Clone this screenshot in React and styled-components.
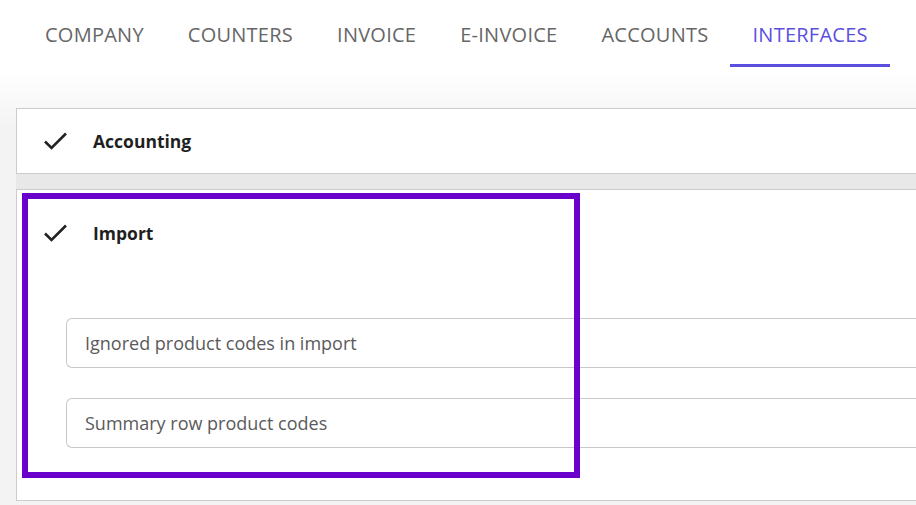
import React from 'react';
import styled, { createGlobalStyle } from 'styled-components';

const GlobalStyle = createGlobalStyle`
  html, body {
    margin: 0;
    padding: 0;
  }
  body {
    width: 916px;
    height: 505px;
    overflow: hidden;
    font-family: 'Open Sans', 'Liberation Sans', sans-serif;
    background: linear-gradient(180deg, #ffffff 0px, #ffffff 70px, #f3f3f3 130px, #f3f3f3 100%);
  }
`;

const Page = styled.div`
  height: 505px;
  display: flex;
  flex-direction: column;
`;

const Tabs = styled.nav`
  display: flex;
  padding-left: 23px;
  height: 67px;
`;

const Tab = styled.div`
  padding: 4px 22px 0;
  display: flex;
  align-items: center;
  font-size: 20px;
  font-weight: 500;
  letter-spacing: 0.25px;
  color: ${props => (props.active ? '#5b4fdf' : '#666666')};
  border-bottom: 3px solid ${props => (props.active ? '#5b4fdf' : 'transparent')};
  box-sizing: border-box;
  height: 67px;
`;

const Content = styled.div`
  margin-top: 41px;
  margin-left: 16px;
  display: flex;
  flex-direction: column;
  background: #e8e8e8;
`;

const Card = styled.section`
  position: relative;
  background: #fff;
  border: 1px solid #cccccc;
  border-right: none;
  margin-bottom: ${props => (props.spaced ? '15px' : '0')};
  padding-bottom: ${props => (props.open ? '52px' : '0')};
`;

const Header = styled.div`
  display: flex;
  align-items: center;
  height: ${props => (props.open ? '86px' : '64px')};
  padding-left: 26px;
`;

const Check = styled.svg`
  width: 25px;
  height: 20px;
  margin-right: 25px;
  flex-shrink: 0;
`;

const Title = styled.h3`
  margin: 0;
  font-size: 17.5px;
  font-weight: 700;
  color: #1f1f1f;
`;

const Fields = styled.div`
  display: flex;
  flex-direction: column;
  gap: 30px;
  padding-left: 49px;
  margin-top: 42px;
`;

const Field = styled.div`
  height: 48px;
  border: 1px solid #c8c8c8;
  border-right: none;
  border-radius: 6px 0 0 6px;
  display: flex;
  align-items: center;
  padding-left: 18px;
  font-size: 18px;
  color: #5a5a5a;
`;

const Highlight = styled.div`
  position: absolute;
  left: 5px;
  top: 3px;
  width: 558px;
  height: 285px;
  box-sizing: border-box;
  border: 6px solid #6a00cc;
  pointer-events: none;
`;

const CheckIcon = () => (
  <Check viewBox="0 0 25 20">
    <path d="M2 10.5 L8.5 17 L23 2.5" fill="none" stroke="#222" strokeWidth="2.6" />
  </Check>
);

const tabs = ['COMPANY', 'COUNTERS', 'INVOICE', 'E-INVOICE', 'ACCOUNTS', 'INTERFACES'];

const App = () => {
  return (
    <Page>
      <GlobalStyle />
      <Tabs>
        {tabs.map(tab => (
          <Tab key={tab} active={tab === 'INTERFACES'}>
            {tab}
          </Tab>
        ))}
      </Tabs>
      <Content>
        <Card spaced>
          <Header>
            <CheckIcon />
            <Title>Accounting</Title>
          </Header>
        </Card>
        <Card open>
          <Header open>
            <CheckIcon />
            <Title>Import</Title>
          </Header>
          <Fields>
            <Field>Ignored product codes in import</Field>
            <Field>Summary row product codes</Field>
          </Fields>
          <Highlight />
        </Card>
      </Content>
    </Page>
  );
};

export default App;
